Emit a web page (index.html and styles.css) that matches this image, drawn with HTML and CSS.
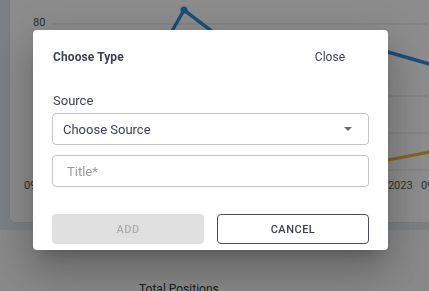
FILE: index.html
```html
<!DOCTYPE html>
<html lang="en">

<head>
    <meta charset="UTF-8">
    <title>Positions</title>
    <meta name="viewport" content="width=device-width, initial-scale=1">
    <link rel="stylesheet" href="styles.css">
</head>

<body>
    <div class="panel">
        <div class="chart-card">
            <svg class="chart" width="430" height="222" viewBox="10 0 430 222">
                <line class="grid" x1="50" y1="24" x2="440" y2="24" />
                <line class="grid" x1="50" y1="96" x2="440" y2="96" />
                <line class="grid" x1="50" y1="133" x2="440" y2="133" />
                <line class="grid" x1="50" y1="170" x2="440" y2="170" />
                <text class="tick" x="33" y="26">80</text>
                <polyline class="series-blue" points="150,70 184,10 230,45 300,40 388,52 440,67" />
                <circle class="dot-blue" cx="184" cy="10" r="3.5" />
                <polyline class="series-orange" points="60,175 200,172 300,168 388,160 440,150" />
                <text class="tick" x="24" y="189">09</text>
                <text class="tick" x="371" y="189">09/2023</text>
                <text class="tick" x="421" y="189">09</text>
            </svg>
        </div>
    </div>
    <div class="section-title">Total Positions</div>

    <div class="overlay">
        <div class="dialog">
            <div class="dialog-header">
                <span class="dialog-title">Choose Type</span>
                <span class="dialog-close">Close</span>
            </div>
            <label class="field-label">Source</label>
            <div class="select-box">
                <span>Choose Source</span>
                <span class="caret"></span>
            </div>
            <div class="text-box">Title*</div>
            <div class="actions">
                <button class="btn btn-add" disabled>ADD</button>
                <button class="btn btn-cancel">CANCEL</button>
            </div>
        </div>
    </div>
</body>

</html>
```

FILE: styles.css
```css
body {
    margin: 0;
    font-family: Roboto, "Liberation Sans", sans-serif;
    background-color: #f7f7f7;
    width: 429px;
    height: 291px;
    overflow: hidden;
}

.panel {
    background-color: #e2e8f0;
    padding: 0 0 7px 9px;
}

.chart-card {
    background-color: #fff;
    border: 1px solid #dde1e6;
    border-top: none;
    border-right: none;
    border-radius: 0 0 0 6px;
    height: 222px;
    overflow: hidden;
}

.chart {
    display: block;
}

.grid {
    stroke: #e3e3e3;
    stroke-width: 1;
}

.tick {
    font-size: 11px;
    fill: #555;
}

.series-blue {
    fill: none;
    stroke: #2f8fe0;
    stroke-width: 3.5;
}

.dot-blue {
    fill: #2f8fe0;
}

.series-orange {
    fill: none;
    stroke: #f2b23c;
    stroke-width: 3;
}

.section-title {
    padding: 52px 0 0 139px;
    font-size: 12px;
    color: #333;
}

.overlay {
    position: fixed;
    inset: 0;
    background-color: rgba(0, 0, 0, 0.45);
    padding: 30px 0 0 33px;
}

.dialog {
    width: 355px;
    height: 220px;
    box-sizing: border-box;
    background-color: #fff;
    border-radius: 4px;
    padding: 20px 19px 6px 19px;
    box-shadow: 0 11px 15px -7px rgba(0, 0, 0, 0.2), 0 24px 38px 3px rgba(0, 0, 0, 0.14), 0 9px 46px 8px rgba(0, 0, 0, 0.12);
    color: #3d3f5c;
}

.dialog-header {
    display: flex;
    justify-content: space-between;
    align-items: center;
    height: 14px;
    font-size: 12px;
    line-height: 14px;
}

.dialog-title {
    font-weight: 700;
    padding-left: 1px;
    letter-spacing: 0.1px;
}

.dialog-close {
    margin-right: 24px;
}

.field-label {
    display: block;
    margin-top: 29px;
    font-size: 13px;
    line-height: 16px;
    padding-left: 1px;
}

.select-box,
.text-box {
    height: 32px;
    box-sizing: border-box;
    border: 1px solid #c4c4c4;
    border-radius: 4px;
    font-size: 13px;
    display: flex;
    align-items: center;
}

.select-box {
    margin-top: 4px;
    padding: 0 16px 0 10px;
    justify-content: space-between;
}

.caret {
    width: 0;
    height: 0;
    border-left: 4px solid transparent;
    border-right: 4px solid transparent;
    border-top: 4px solid #6b6b6b;
}

.text-box {
    margin-top: 10px;
    padding-left: 14px;
    color: #9a9a9a;
}

.actions {
    display: flex;
    gap: 13px;
    margin-top: 27px;
}

.btn {
    width: 152px;
    height: 30px;
    border-radius: 4px;
    font-family: inherit;
    font-size: 11px;
    font-weight: 500;
    letter-spacing: 0.5px;
}

.btn-add {
    background-color: #e0e0e0;
    border: none;
    color: #adadad;
}

.btn-cancel {
    background-color: #fff;
    border: 1px solid #4a4c66;
    color: #3d3f5c;
}
```
